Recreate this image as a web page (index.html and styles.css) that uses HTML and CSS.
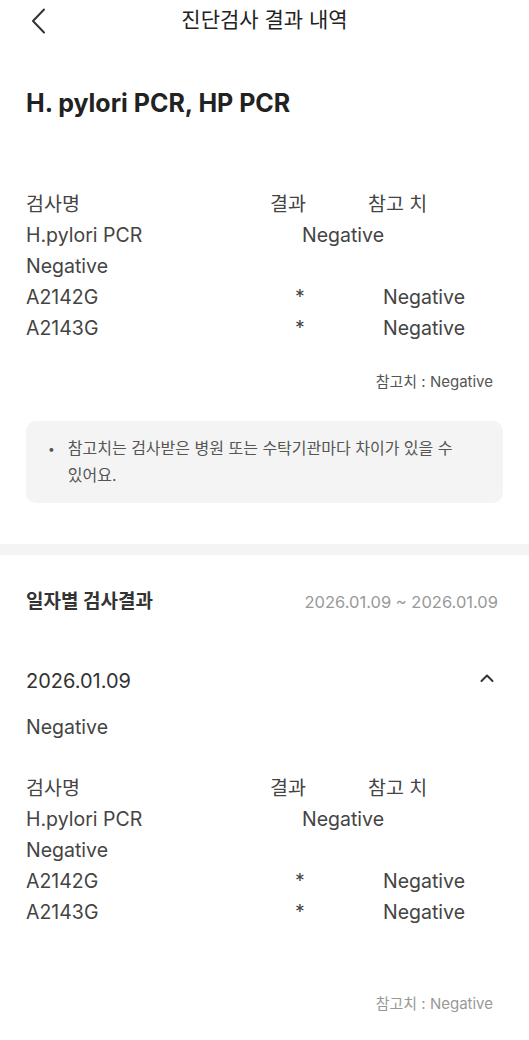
FILE: index.html
```html
<!DOCTYPE html>
<html>
<head>
  <meta charset="utf-8">
  <title>진단검사 결과 내역</title>
  <link rel="stylesheet" href="styles.css">
</head>
<body>
  <header class="topbar">
    <button class="back" aria-label="뒤로">
      <svg width="16" height="26" viewBox="0 0 16 26"><polyline points="13,1.5 2,13 13,24.5" fill="none" stroke="#333" stroke-width="2" stroke-linecap="round" stroke-linejoin="round"/></svg>
    </button>
    <h2 class="topbar-title">진단검사 결과 내역</h2>
  </header>

  <section class="summary">
    <h1 class="test-title">H. pylori PCR, HP PCR</h1>

    <div class="result-grid">
      <div>검사명</div><div>결과</div><div>참고 치</div>
      <div>H.pylori PCR</div><div class="span-val">Negative</div>
      <div>Negative</div><div></div><div></div>
      <div>A2142G</div><div class="star">*</div><div class="ref-val">Negative</div>
      <div>A2143G</div><div class="star">*</div><div class="ref-val">Negative</div>
    </div>

    <p class="ref-note">참고치 : Negative</p>

    <div class="notice">
      <span class="bullet">•</span>
      <p>참고치는 검사받은 병원 또는 수탁기관마다 차이가 있을 수 있어요.</p>
    </div>
  </section>

  <div class="divider"></div>

  <section class="history">
    <div class="history-head">
      <h3>일자별 검사결과</h3>
      <span class="range">2026.01.09 ~ 2026.01.09</span>
    </div>

    <div class="date-row">
      <span>2026.01.09</span>
      <svg class="toggle" width="14" height="10" viewBox="0 0 14 10"><polyline points="1.5,8 7,2.5 12.5,8" fill="none" stroke="#333" stroke-width="2" stroke-linecap="round" stroke-linejoin="round"/></svg>
    </div>
    <div class="date-result">Negative</div>

    <div class="result-grid second">
      <div>검사명</div><div>결과</div><div>참고 치</div>
      <div>H.pylori PCR</div><div class="span-val">Negative</div>
      <div>Negative</div><div></div><div></div>
      <div>A2142G</div><div class="star">*</div><div class="ref-val">Negative</div>
      <div>A2143G</div><div class="star">*</div><div class="ref-val">Negative</div>
    </div>

    <p class="ref-note light">참고치 : Negative</p>
  </section>
</body>
</html>
```

FILE: styles.css
```css
:root {
  --text-dark: #222;
  --text-main: #444;
  --text-muted: #999;
  --panel-bg: #f4f4f4;
}

* {
  box-sizing: border-box;
}

body {
  width: 529px;
  margin: 0;
  background: #fff;
  font-family: Inter, "Noto Sans CJK KR", sans-serif;
  color: var(--text-main);
}

h1, h2, h3, p {
  margin: 0;
}

.topbar {
  position: relative;
  height: 40px;
  display: flex;
  align-items: center;
  justify-content: center;
}

.back {
  position: absolute;
  left: 31px;
  top: 8px;
  padding: 0;
  border: none;
  background: none;
  line-height: 0;
}

.topbar-title {
  font-size: 21px;
  font-weight: 400;
  color: var(--text-dark);
  line-height: 40px;
}

.summary {
  padding: 0 26px;
}

.test-title {
  margin-top: 47px;
  font-size: 25px;
  font-weight: 700;
  line-height: 32px;
  color: var(--text-dark);
}

.result-grid {
  margin-top: 70px;
  display: grid;
  grid-template-columns: 244px 98px 1fr;
  font-size: 19.5px;
  line-height: 31px;
  color: var(--text-main);
}

.result-grid .span-val {
  grid-column: span 2;
  padding-left: 32px;
}

.result-grid .star {
  padding-left: 25px;
}

.result-grid .ref-val {
  padding-left: 15px;
}

.ref-note {
  margin-top: 28px;
  padding-right: 10px;
  text-align: right;
  font-size: 15px;
  line-height: 20px;
  color: #555;
}

.ref-note.light {
  margin-top: 66px;
  color: var(--text-muted);
}

.notice {
  margin-top: 29px;
  display: flex;
  gap: 13px;
  padding: 14px 20px 14px 22px;
  background: var(--panel-bg);
  border-radius: 10px;
  font-size: 16px;
  line-height: 27px;
  color: #555;
  word-break: keep-all;
}

.notice .bullet {
  font-size: 12px;
}

.divider {
  margin-top: 41px;
  height: 11px;
  background: var(--panel-bg);
}

.history {
  padding: 0 26px;
}

.history-head {
  margin-top: 34px;
  display: flex;
  justify-content: space-between;
  align-items: center;
  line-height: 26px;
}

.history-head h3 {
  font-size: 19px;
  font-weight: 700;
  color: #333;
}

.range {
  padding-right: 5px;
  font-size: 16.5px;
  color: var(--text-muted);
}

.date-row {
  margin-top: 52px;
  display: flex;
  justify-content: space-between;
  align-items: center;
  padding-right: 9px;
  font-size: 20px;
  line-height: 28px;
  color: #333;
}

.date-row .toggle {
  margin-bottom: 6px;
}

.date-result {
  margin-top: 18px;
  font-size: 19.5px;
  line-height: 28px;
  color: var(--text-main);
}

.result-grid.second {
  margin-top: 32px;
}
```
